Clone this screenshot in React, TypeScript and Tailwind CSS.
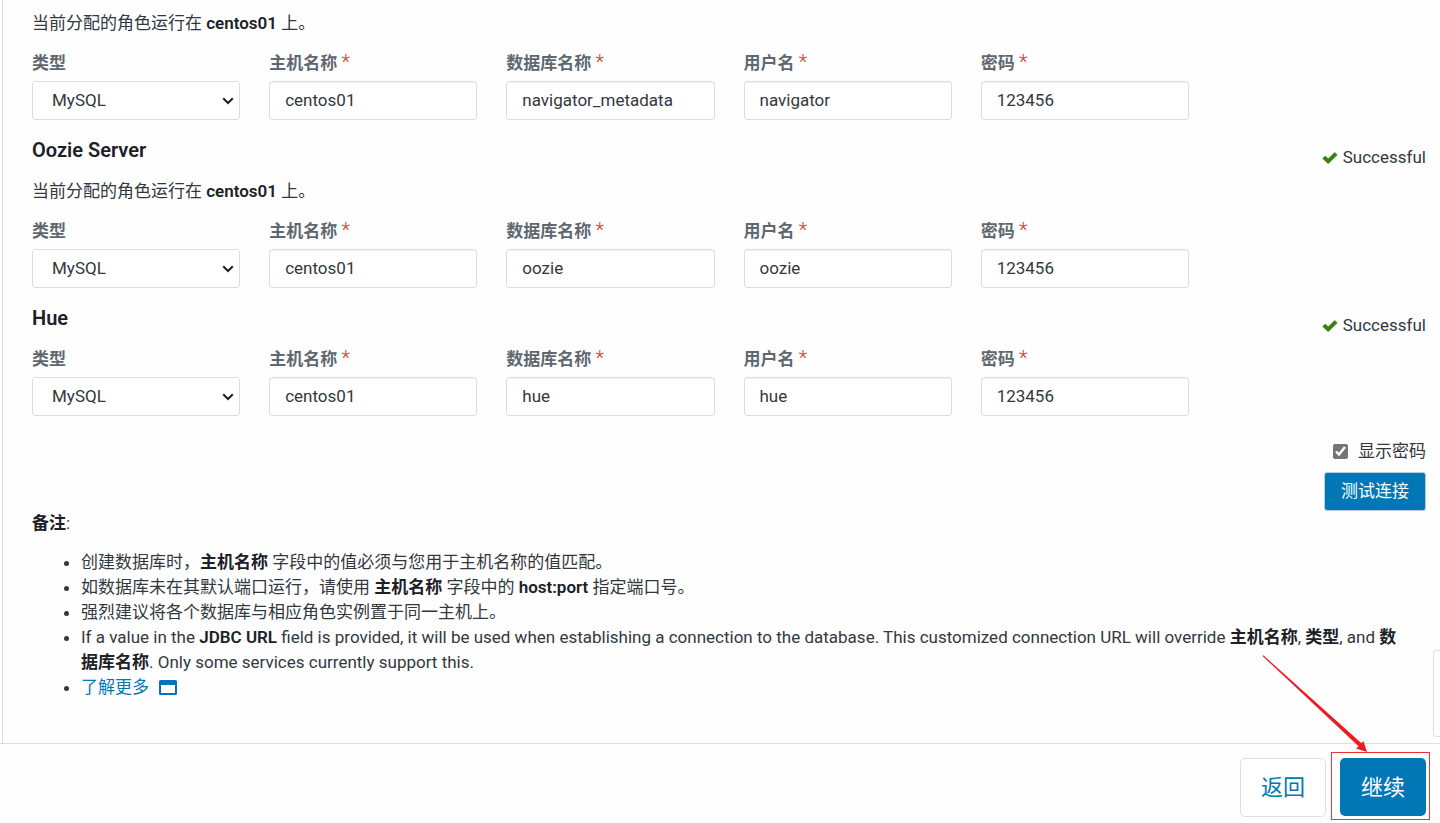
import { useState } from "react";

type Setup = {
  id: string;
  title?: string;
  host?: string;
  values: { hostname: string; database: string; user: string; password: string };
};

const setups: Setup[] = [
  {
    id: "navigator",
    host: "centos01",
    values: {
      hostname: "centos01",
      database: "navigator_metadata",
      user: "navigator",
      password: "123456",
    },
  },
  {
    id: "oozie",
    title: "Oozie Server",
    host: "centos01",
    values: { hostname: "centos01", database: "oozie", user: "oozie", password: "123456" },
  },
  {
    id: "hue",
    title: "Hue",
    values: { hostname: "centos01", database: "hue", user: "hue", password: "123456" },
  },
];

const CheckIcon = () => (
  <svg className="w-[16px] h-[12px]" viewBox="0 0 16 12" fill="#3b8110" aria-hidden="true">
    <path d="M0.6 6.2 L2.9 3.9 Q3.2 3.6 3.5 3.9 L6.2 6.5 L12.4 0.5 Q12.8 0.2 13.1 0.5 L15.2 2.5 Q15.5 2.9 15.2 3.2 L6.7 11.5 Q6.2 11.9 5.7 11.5 L0.6 6.8 Q0.3 6.5 0.6 6.2 Z" />
  </svg>
);

const ChevronIcon = () => (
  <svg
    className="absolute right-[6px] top-4 w-[12px] h-[8px] pointer-events-none"
    viewBox="0 0 12 8"
    fill="none"
    stroke="#1b2127"
    strokeWidth="2"
    aria-hidden="true"
  >
    <path d="M1.2 1.2 L6 6 L10.8 1.2" />
  </svg>
);

const WindowIcon = () => (
  <svg
    className="inline-block w-[18px] h-[15px] ml-[10px] align-[-2px]"
    viewBox="0 0 18 15"
    fill="#0277b5"
    aria-hidden="true"
  >
    <path
      fillRule="evenodd"
      d="M1.5 0 H16.5 Q18 0 18 1.5 V13.5 Q18 15 16.5 15 H1.5 Q0 15 0 13.5 V1.5 Q0 0 1.5 0 Z M2 5 V13 H16 V5 Z"
    />
  </svg>
);

const Field = ({
  id,
  label,
  value,
  type = "text",
}: {
  id: string;
  label: string;
  value: string;
  type?: string;
}) => (
  <div className="flex flex-col gap-[5px]">
    <label htmlFor={id} className="font-bold text-[#5f6870]">
      {label} <span className="font-light text-[20px] leading-none text-[#e03127]">*</span>
    </label>
    <input
      id={id}
      type={type}
      defaultValue={value}
      className="w-full h-[39px] px-[15px] pb-[2px] bg-white border border-[#dcdfe1] rounded-[3px] shadow-[inset_0_1px_1px_rgba(0,0,0,0.06)]"
    />
  </div>
);

const DatabaseSetup = ({ setup, showPassword }: { setup: Setup; showPassword: boolean }) => {
  const { id, title, host, values } = setup;
  return (
    <section className="flex flex-col gap-[15px]">
      {title && (
        <div className="h-7 flex items-start justify-between">
          <h3 className="text-[20px] leading-7 font-semibold text-[#1b2127]">{title}</h3>
          <div className="flex items-center gap-[5px] pt-[9px]">
            <CheckIcon />
            Successful
          </div>
        </div>
      )}
      {host && (
        <p>
          当前分配的角色运行在 <strong className="font-semibold text-[#1b2127]">{host}</strong> 上。
        </p>
      )}
      <div className="grid grid-cols-6 gap-x-[29px]">
        <div className="flex flex-col gap-[5px]">
          <label htmlFor={`${id}-type`} className="font-bold text-[#5f6870]">
            类型
          </label>
          <div className="relative">
            <select
              id={`${id}-type`}
              className="block appearance-none w-full h-[39px] pl-[19px] bg-white border border-[#dcdfe1] rounded-[3px]"
            >
              <option>MySQL</option>
            </select>
            <ChevronIcon />
          </div>
        </div>
        <Field id={`${id}-hostname`} label="主机名称" value={values.hostname} />
        <Field id={`${id}-database`} label="数据库名称" value={values.database} />
        <Field id={`${id}-user`} label="用户名" value={values.user} />
        <Field
          id={`${id}-password`}
          label="密码"
          value={values.password}
          type={showPassword ? "text" : "password"}
        />
      </div>
    </section>
  );
};

const Notes = () => (
  <div className="[&_strong]:text-[#1b2127]">
    <p>
      <strong>备注</strong>:
    </p>
    <ul className="mt-[14px] pl-[49px] pr-5 list-disc">
      <li>
        创建数据库时，<strong>主机名称</strong> 字段中的值必须与您用于主机名称的值匹配。
      </li>
      <li>
        如数据库未在其默认端口运行，请使用 <strong>主机名称</strong> 字段中的{" "}
        <strong className="font-semibold">host:port</strong> 指定端口号。
      </li>
      <li>强烈建议将各个数据库与相应角色实例置于同一主机上。</li>
      <li>
        If a value in the <strong className="font-semibold">JDBC URL</strong> field is provided, it
        will be used when establishing a connection to the database. This customized connection URL
        will override <strong>主机名称</strong>, <strong>类型</strong>, and{" "}
        <strong>数据库名称</strong>. Only some services currently support this.
      </li>
      <li>
        <a href="#" className="text-[#0277b5]">
          了解更多
          <WindowIcon />
        </a>
      </li>
    </ul>
  </div>
);

const WizardFooter = () => (
  <footer className="relative border-t border-[#dcdfe1] pt-2 pb-[3px] pr-[10px] flex items-end justify-end gap-[5px] text-[22px] leading-[33px]">
    <button
      type="button"
      className="h-[59px] mb-[3px] px-[20px] border border-[#dcdfe1] rounded-[5px] bg-white text-[#0277b5]"
    >
      返回
    </button>
    <div className="border border-[#ee3338] pt-[5px] pb-[3px] pl-2 pr-[3px] flex">
      <button type="button" className="h-[58px] px-[21px] rounded-[5px] bg-[#0277b5] text-white">
        继续
      </button>
    </div>
    <svg
      className="absolute right-[72px] bottom-[70px] w-[106px] h-[98px]"
      viewBox="0 0 106 98"
      fill="#ed1c24"
      aria-hidden="true"
    >
      <path d="M0.5 1 L1.3 0.3 L99.5 88.2 L101.5 86 L105 97 L94 93.5 L96.5 91.3 Z" />
    </svg>
  </footer>
);

const App = () => {
  const [showPassword, setShowPassword] = useState(true);

  return (
    <div className="relative min-h-screen flex flex-col overflow-hidden bg-[#fefefe] text-[17px] leading-[25px] text-[#32383e] font-[Roboto,'Noto_Sans_CJK_SC',sans-serif]">
      <main className="grow flex flex-col ml-[2px] border-l border-[#dcdfe1] pt-[11px] pl-[29px] pr-[14px] pb-10">
        <div className="flex flex-col gap-4">
          {setups.map((setup) => (
            <DatabaseSetup key={setup.id} setup={setup} showPassword={showPassword} />
          ))}
        </div>
        <div className="mt-[23px] flex flex-col items-end gap-2">
          <label className="flex items-center gap-[10px]">
            <input
              type="checkbox"
              checked={showPassword}
              onChange={(e) => setShowPassword(e.target.checked)}
              className="size-[15px] accent-[#757575]"
            />
            显示密码
          </label>
          <button
            type="button"
            className="h-[39px] px-4 border border-[#b5cfdf] rounded-[3px] bg-[#0277b5] text-white"
          >
            测试连接
          </button>
        </div>
        <Notes />
      </main>
      <WizardFooter />
      <div className="absolute right-0 bottom-[86px] w-[7px] h-[87px] border border-r-0 border-[#dcdfe1] rounded-l-[4px] bg-white" />
    </div>
  );
};

export default App;
